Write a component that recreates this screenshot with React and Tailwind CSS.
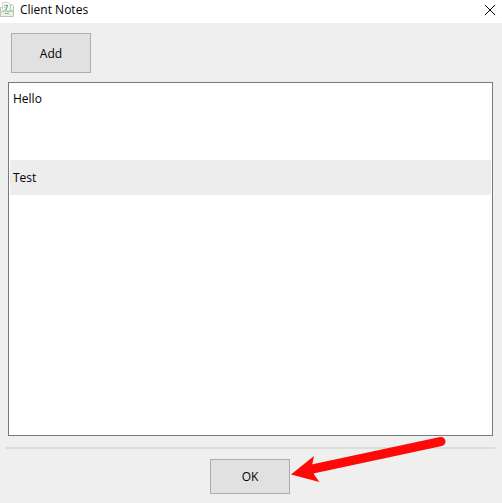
import React, { useState } from 'react';

const initialNotes = [
    { id: 1, text: 'Hello', rowClass: 'pt-[7px] pb-[53px]' },
    { id: 2, text: 'Test', rowClass: 'pt-[10px] pb-[9px]' },
];

const AppIcon = () => (
    <svg width="15" height="16" viewBox="0 0 15 16" aria-hidden="true" className="mb-[3px] shrink-0">
        <path d="M2.5 8.5v-8h6l1.500 1.500v6.500z" fill="#f6f9fb" stroke="#cddccb" />
        <path d="M10.5 2.5h2l1 1v5h-3z" fill="#eef5ea" stroke="#b9cfb3" />
        <path d="M0.5 9.5h13v5h-13z" fill="#e9f2e4" stroke="#b4cbae" />
        <path d="M0.5 9V5.500h1.500" fill="none" stroke="#b4cbae" />
        <path d="M5 11.500h4" stroke="#93b28c" />
        <path d="M4 3.500h1.500" stroke="#f0b040" />
        <path d="M5.5 3.500H8" stroke="#4a8be8" />
        <path d="M7.5 4L6 7.500" stroke="#4a8be8" fill="none" />
        <path d="M4 5.500h1.500" stroke="#e9a0b8" />
        <path d="M5 7.500h2" stroke="#8fbf6a" />
    </svg>
);

const Arrow = () => (
    <svg
        width="160"
        height="60"
        viewBox="0 0 160 60"
        aria-hidden="true"
        className="absolute left-full bottom-0 pointer-events-none"
    >
        <path d="M20 35.500L151 7.500" stroke="#ff0808" strokeWidth="9" strokeLinecap="round" fill="none" />
        <path d="M1 40.500L24 22L22 31.500L24 40.500L29.500 48Z" fill="#ff0808" />
    </svg>
);

const ClientNotes = () => {
    const [notes, setNotes] = useState(initialNotes);
    const [selectedId, setSelectedId] = useState(2);

    const handleAdd = () => {
        const id = notes.length + 1;
        setNotes([...notes, { id, text: 'New note', rowClass: 'pt-[10px] pb-[9px]' }]);
        setSelectedId(id);
    };

    return (
        <div className="min-h-screen flex flex-col bg-[#efefef] text-black text-[12px] leading-[16px] font-['Open_Sans','Noto_Sans',sans-serif]">
            <header className="h-[23px] flex items-center bg-white pr-[6px]">
                <AppIcon />
                <h1 className="ml-[5px] flex-1 pb-[3px]">Client Notes</h1>
                <button type="button" aria-label="Close" className="pb-[3px]">
                    <svg width="12" height="12" viewBox="0 0 12 12" aria-hidden="true">
                        <path d="M1 1l10 10M11 1L1 11" stroke="#000" strokeWidth="1" />
                    </svg>
                </button>
            </header>

            <main className="flex-1 flex flex-col px-2 pt-[10px]">
                <button
                    type="button"
                    onClick={handleAdd}
                    className="w-20 h-10 ml-[3px] pt-[2px] bg-[#e1e1e1] border border-[#adadad]"
                >
                    Add
                </button>

                <ul className="flex-1 mt-[9px] mr-px p-px bg-white border border-[#7a7a7a]">
                    {notes.map((note) => (
                        <li key={note.id}>
                            <button
                                type="button"
                                onClick={() => setSelectedId(note.id)}
                                className={`block w-full pl-[3px] text-left ${note.rowClass} ${
                                    note.id === selectedId ? 'bg-[#ededed]' : 'bg-white'
                                }`}
                            >
                                {note.text}
                            </button>
                        </li>
                    ))}
                </ul>
            </main>

            <footer className="mt-[11px] pl-[6px] pr-[7px] pb-[9px]">
                <hr className="border-0 h-[2px] bg-[#dcdcdc]" />
                <div className="mt-[10px] pr-px flex justify-center">
                    <div className="relative">
                        <button type="button" className="block w-20 h-[35px] bg-[#e1e1e1] border border-[#adadad]">
                            OK
                        </button>
                        <Arrow />
                    </div>
                </div>
            </footer>
        </div>
    );
};

export default ClientNotes;
